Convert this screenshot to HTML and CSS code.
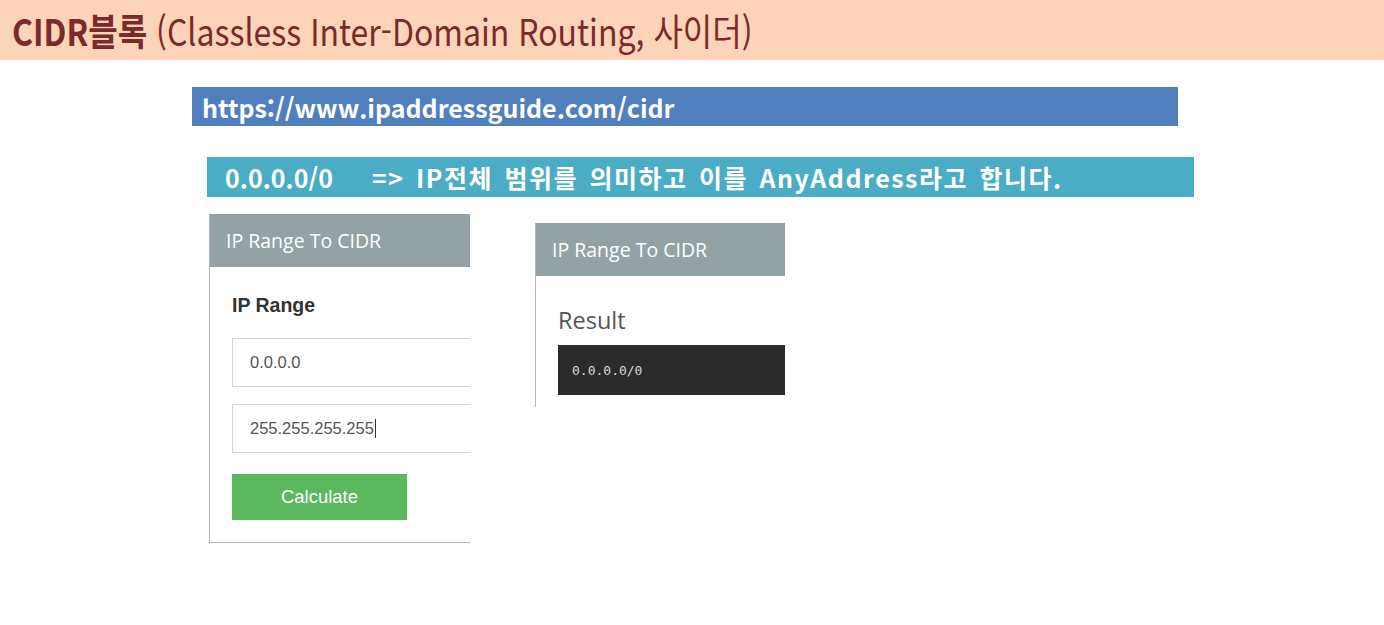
FILE: index.html
```html
<!DOCTYPE html>
<html lang="ko">
<head>
<meta charset="utf-8">
<title>CIDR블록</title>
<link rel="stylesheet" href="styles.css">
</head>
<body>
<header class="title-band">
  <h1 class="title"><b>CIDR블록</b> (Classless Inter-Domain Routing, 사이더)</h1>
</header>
<main class="content">
  <div class="url-bar">https://www.ipaddressguide.com/cidr</div>
  <div class="note-bar"><span class="note-ip">0.0.0.0/0</span><span class="note-text">=&gt; IP전체 범위를 의미하고 이를 AnyAddress라고 합니다.</span></div>
  <div class="cards">
    <section class="card card-form">
      <div class="card-head">IP Range To CIDR</div>
      <div class="card-body">
        <div class="label">IP Range</div>
        <div class="field">0.0.0.0</div>
        <div class="field">255.255.255.255<span class="caret"></span></div>
        <div class="btn">Calculate</div>
      </div>
    </section>
    <section class="card card-result">
      <div class="card-head">IP Range To CIDR</div>
      <div class="card-body result-body">
        <div class="result-title">Result</div>
        <pre class="result-code">0.0.0.0/0</pre>
      </div>
    </section>
  </div>
</main>
</body>
</html>
```
FILE: styles.css
```css
* { box-sizing: border-box; }
html, body { margin: 0; padding: 0; background: #ffffff; }
body { width: 1384px; height: 625px; overflow: hidden; font-family: "Noto Sans", "Noto Sans CJK KR", sans-serif; }

.title-band {
  height: 60px;
  background: #fdd4b9;
  display: flex;
  align-items: center;
  padding-left: 12px;
}
.title {
  margin: 0;
  font-family: "Noto Sans CJK KR", sans-serif;
  font-weight: 400;
  font-size: 37px;
  color: #7a2a2a;
  letter-spacing: 0;
  transform: scaleX(0.865);
  transform-origin: left center;
  white-space: nowrap;
  line-height: 1;
}
.title b { font-weight: 700; }

.content { display: flex; flex-direction: column; }

.url-bar {
  margin: 27px 0 0 192px;
  width: 986px;
  height: 39px;
  background: #4f80bd;
  color: #fff;
  font-family: "Noto Sans CJK KR", sans-serif;
  font-weight: 700;
  font-size: 25px;
  display: flex;
  align-items: center;
  padding-left: 10px;
}
.note-bar {
  margin: 31px 0 0 207px;
  width: 987px;
  height: 40px;
  background: #4bacc6;
  color: #fff;
  font-family: "Noto Sans CJK KR", sans-serif;
  font-weight: 700;
  font-size: 25px;
  display: flex;
  align-items: center;
  padding-left: 18px;
  white-space: nowrap;
}
.note-ip { width: 147px; }
.note-text { letter-spacing: 1.5px; word-spacing: 3px; }

.cards {
  display: flex;
  align-items: flex-start;
  gap: 65px;
  margin: 17px 0 0 209px;
}
.card {
  border-left: 1px solid #b5b5b5;
  overflow: hidden;
  background: #fff;
}
.card-head {
  height: 53px;
  background: #95a2a5;
  color: #fff;
  font-family: "Open Sans", sans-serif;
  font-size: 19.5px;
  display: flex;
  align-items: center;
  padding-left: 16px;
}
.card-form {
  width: 261px;
  border-bottom: 1px solid #b5b5b5;
}
.card-form .card-body {
  padding: 26px 0 22px 22px;
  display: flex;
  flex-direction: column;
  align-items: flex-start;
}
.label {
  font-family: "Liberation Sans", Arial, sans-serif;
  font-weight: 700;
  font-size: 19.5px;
  color: #333;
  height: 24px;
  line-height: 24px;
  margin-bottom: 21px;
}
.field {
  width: 260px;
  height: 49px;
  border: 1px solid #d4d4d4;
  display: flex;
  align-items: center;
  padding-left: 17px;
  font-family: "Liberation Sans", Arial, sans-serif;
  font-size: 16.5px;
  color: #555;
  margin-bottom: 17px;
}
.caret {
  display: inline-block;
  width: 1px;
  height: 19px;
  background: #333;
  margin-left: 1px;
}
.btn {
  margin-top: 4px;
  width: 175px;
  height: 46px;
  background: #5cb85c;
  color: #fff;
  font-family: "Liberation Sans", Arial, sans-serif;
  font-size: 18.5px;
  display: flex;
  align-items: center;
  justify-content: center;
}

.card-result {
  width: 250px;
  margin-top: 9px;
}
.result-body {
  padding: 28px 0 12px 22px;
}
.result-title {
  font-family: "Open Sans", sans-serif;
  font-size: 23.5px;
  color: #555;
  height: 32px;
  line-height: 32px;
  margin-bottom: 9px;
}
.result-code {
  margin: 0;
  height: 50px;
  background: #2b2b2b;
  color: #d8d8d8;
  font-family: "DejaVu Sans Mono", monospace;
  font-size: 13px;
  display: flex;
  align-items: center;
  padding-left: 14px;
}
```
